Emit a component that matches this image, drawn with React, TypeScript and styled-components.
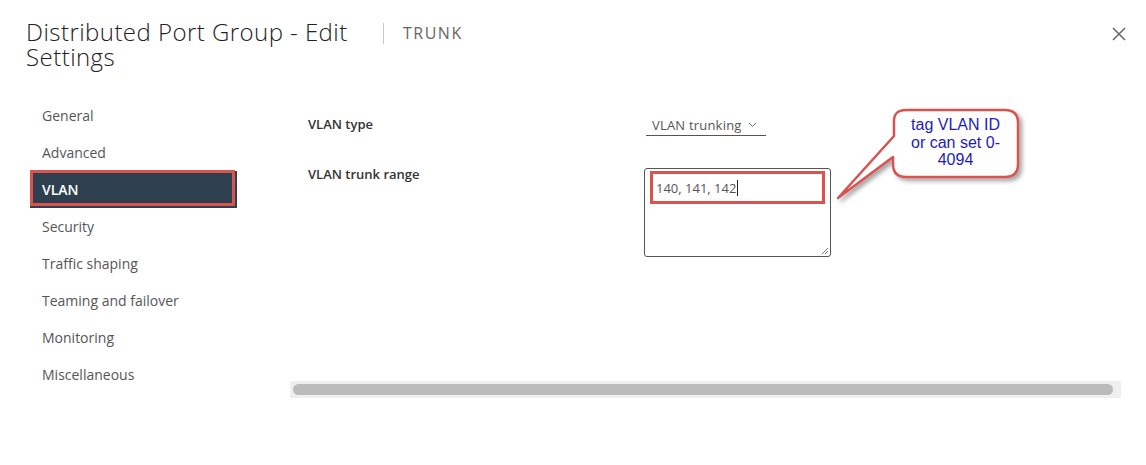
import React from "react";
import styled, { createGlobalStyle } from "styled-components";

const GlobalStyle = createGlobalStyle`
  body {
    margin: 0;
    background: #fff;
    font-family: "Open Sans", "Noto Sans", sans-serif;
  }
`;

const Page = styled.div`
  position: relative;
  width: 1146px;
  height: 465px;
  overflow: hidden;
`;

const Header = styled.div`
  display: flex;
  align-items: flex-start;
  padding: 19px 0 0 26px;
`;

const Title = styled.h1`
  margin: 0;
  width: 340px;
  font-size: 24px;
  line-height: 25px;
  font-weight: 300;
  color: #222;
  letter-spacing: 0.45px;
`;

const Divider = styled.div`
  width: 1px;
  height: 21px;
  margin: 4px 0 0 17px;
  background: #c8c8c8;
`;

const SubTitle = styled.div`
  margin: 4px 0 0 19px;
  font-size: 16px;
  line-height: 21px;
  letter-spacing: 1.5px;
  color: #666;
`;

const Close = styled.button`
  margin: 8px 20px 0 auto;
  padding: 0;
  border: 0;
  background: none;
  width: 14px;
  height: 14px;
  display: flex;
`;

const Body = styled.div`
  display: flex;
  margin-top: 28px;
`;

const Nav = styled.nav`
  width: 207px;
  margin-left: 30px;
  margin-right: 53px;
  display: flex;
  flex-direction: column;
`;

const NavItem = styled.div<{ $active?: boolean }>`
  position: relative;
  height: 37px;
  display: flex;
  align-items: center;
  padding-left: 12px;
  font-size: 14px;
  color: ${(p) => (p.$active ? "#fff" : "#565656")};
  font-weight: ${(p) => (p.$active ? 600 : 400)};
  background: ${(p) => (p.$active ? "#2e3f4f" : "transparent")};

  ${(p) =>
    p.$active &&
    `
    &::after {
      content: "";
      position: absolute;
      left: 0;
      top: -1px;
      width: 205px;
      height: 36px;
      box-sizing: border-box;
      border: 3px solid #d9534f;
    }
  `}
`;

const Content = styled.div`
  width: 831px;
  height: 301px;
  display: flex;
  flex-direction: column;
`;

const Form = styled.div`
  flex: 1;
  padding: 18px 0 0 18px;
  display: grid;
  grid-template-columns: 336px 1fr;
  grid-auto-rows: min-content;
  row-gap: 32px;
`;

const Label = styled.div`
  font-size: 13px;
  font-weight: 600;
  line-height: 18px;
  color: #333;
`;

const TopLabel = styled(Label)`
  line-height: 12px;
`;

const Select = styled.div`
  width: 120px;
  height: 21px;
  box-sizing: border-box;
  margin-left: 2px;
  padding-left: 6px;
  border-bottom: 1px solid #555;
  display: flex;
  align-items: center;
  gap: 6px;
  font-size: 13px;
  letter-spacing: 0.2px;
  color: #565656;
`;

const TextBox = styled.div`
  position: relative;
  width: 187px;
  height: 89px;
  box-sizing: border-box;
  border: 1px solid #555;
  border-radius: 3px;
  padding: 2px 0 0 5px;
`;

const Highlight = styled.div`
  width: 175px;
  height: 33px;
  box-sizing: border-box;
  border: 3px solid #d9534f;
  padding-left: 3px;
  display: flex;
  align-items: center;
  font-size: 13px;
  color: #565656;
`;

const Caret = styled.span`
  display: inline-block;
  width: 1px;
  height: 16px;
  background: #222;
  margin-left: 1px;
`;

const Grip = styled.svg`
  position: absolute;
  right: 1px;
  bottom: 1px;
`;

const ScrollTrack = styled.div`
  height: 17px;
  background: #efefef;
  padding: 3px 8px 3px 3px;
  box-sizing: border-box;
`;

const ScrollThumb = styled.div`
  height: 11px;
  border-radius: 6px;
  background: #bbbbbb;
`;

const Callout = styled.div`
  position: absolute;
  left: 830px;
  top: 100px;
  width: 200px;
  height: 110px;
`;

const CalloutText = styled.div`
  position: absolute;
  left: 63px;
  top: 16px;
  width: 125px;
  text-align: center;
  font-family: "Liberation Sans", Arial, sans-serif;
  font-size: 16px;
  line-height: 17.5px;
  color: #1d1db8;
`;

const navItems = [
  "General",
  "Advanced",
  "VLAN",
  "Security",
  "Traffic shaping",
  "Teaming and failover",
  "Monitoring",
  "Miscellaneous",
];

export default function App() {
  return (
    <Page>
      <GlobalStyle />
      <Header>
        <Title>Distributed Port Group - Edit Settings</Title>
        <Divider />
        <SubTitle>TRUNK</SubTitle>
        <Close aria-label="close">
          <svg width="14" height="14" viewBox="0 0 14 14">
            <path d="M1 1 L13 13 M13 1 L1 13" stroke="#666" strokeWidth="1.5" />
          </svg>
        </Close>
      </Header>
      <Body>
        <Nav>
          {navItems.map((n) => (
            <NavItem key={n} $active={n === "VLAN"}>
              {n}
            </NavItem>
          ))}
        </Nav>
        <Content>
          <Form>
            <Label>VLAN type</Label>
            <div>
              <Select>
                VLAN trunking
                <svg width="9" height="6" viewBox="0 0 9 6">
                  <path d="M1 1 L4.5 4.5 L8 1" fill="none" stroke="#666" strokeWidth="1" />
                </svg>
              </Select>
            </div>
            <TopLabel>VLAN trunk range</TopLabel>
            <div>
              <TextBox>
                <Highlight>
                  140, 141, 142
                  <Caret />
                </Highlight>
                <Grip width="8" height="8" viewBox="0 0 8 8">
                  <path d="M7 1 L1 7 M7 4 L4 7" stroke="#777" strokeWidth="1" />
                </Grip>
              </TextBox>
            </div>
          </Form>
          <ScrollTrack>
            <ScrollThumb />
          </ScrollTrack>
        </Content>
      </Body>
      <Callout>
        <svg width="200" height="110" viewBox="0 0 200 110" style={{ position: "absolute", left: 0, top: 0 }}>
          <defs>
            <filter id="sh" x="-20%" y="-20%" width="140%" height="140%">
              <feDropShadow dx="3" dy="3" stdDeviation="2" floodColor="#000" floodOpacity="0.35" />
            </filter>
          </defs>
          <path
            d="M76 10 H175 Q188 10 188 23 V64 Q188 77 175 77 H76 Q63 77 63 64 V57 L8 98 L64 36 V23 Q63 10 76 10 Z"
            fill="#fff"
            stroke="#d9534f"
            strokeWidth="2.5"
            strokeLinejoin="round"
            filter="url(#sh)"
          />
        </svg>
        <CalloutText>
          tag VLAN ID
          <br />
          or can set 0-
          <br />
          4094
        </CalloutText>
      </Callout>
    </Page>
  );
}
